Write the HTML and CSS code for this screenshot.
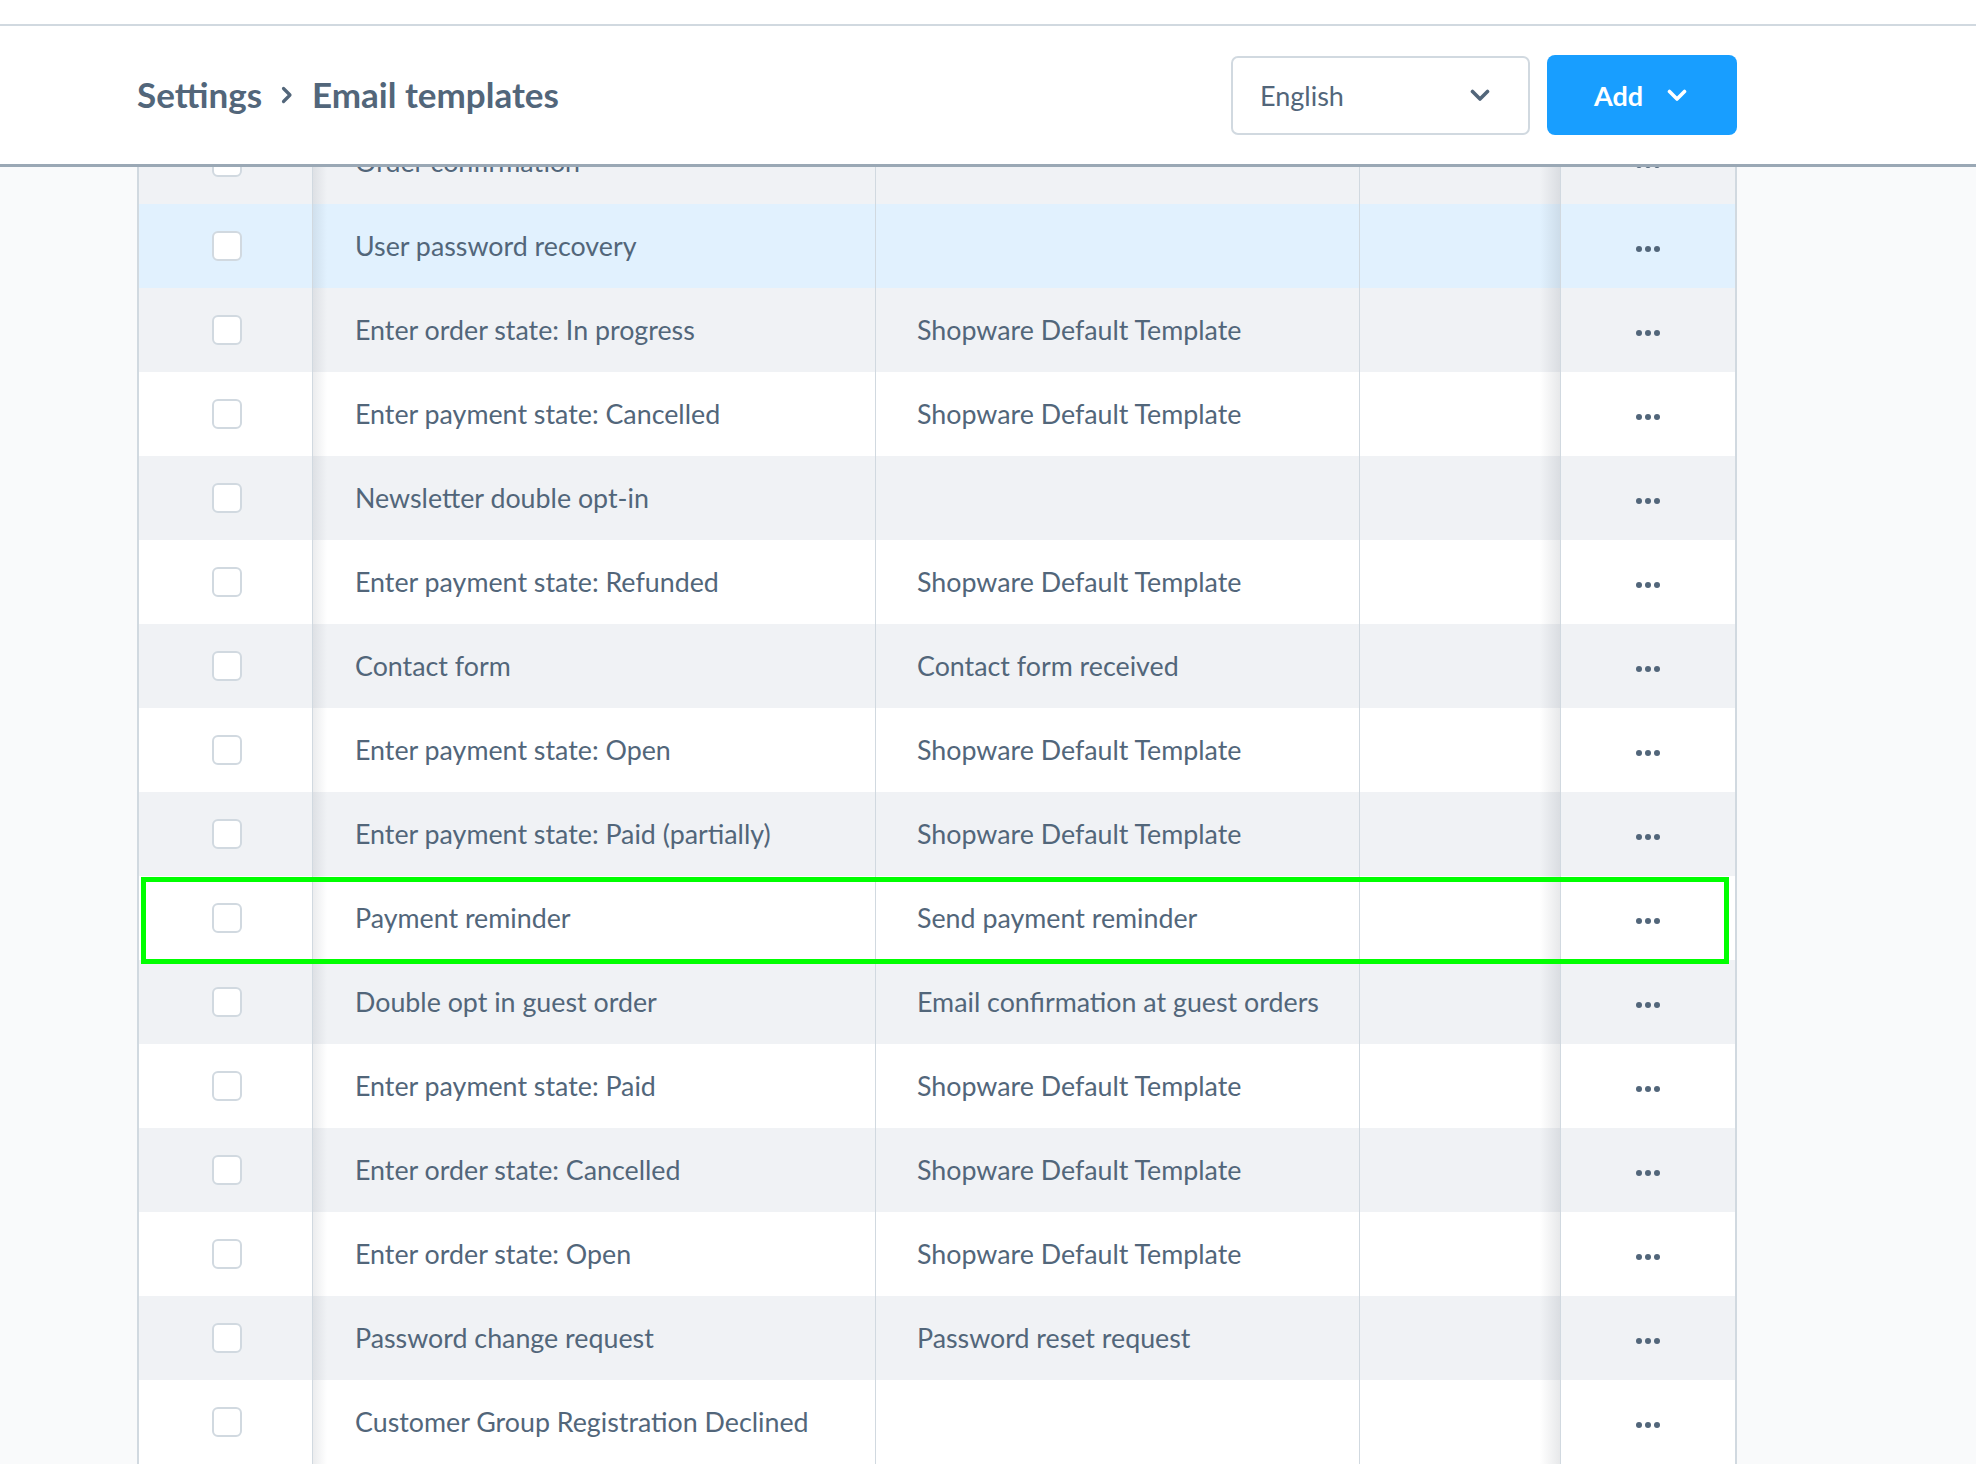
FILE: index.html
```html
<!DOCTYPE html>
<html lang="en">
<head>
<meta charset="utf-8">
<title>Email templates</title>
<link rel="stylesheet" href="styles.css">
</head>
<body>
<div class="topbar"></div>
<header class="header">
  <div class="header-inner">
    <nav class="crumbs">
      <span>Settings</span>
      <svg class="crumb-sep" width="12" height="18" viewBox="0 0 12 18"><path d="M2.5 2.5 L9 9 L2.5 15.5" fill="none" stroke="currentColor" stroke-width="3.2" stroke-linecap="round" stroke-linejoin="round"/></svg>
      <span>Email templates</span>
    </nav>
    <div class="toolbar">
      <div class="select">
        <span>English</span>
        <svg width="20" height="13" viewBox="0 0 20 13"><path d="M2.5 2.5 L10 10 L17.5 2.5" fill="none" stroke="currentColor" stroke-width="3.6" stroke-linecap="round" stroke-linejoin="round"/></svg>
      </div>
      <button class="btn">
        <span>Add</span>
        <svg width="20" height="13" viewBox="0 0 20 13"><path d="M2.5 2.5 L10 10 L17.5 2.5" fill="none" stroke="currentColor" stroke-width="3.6" stroke-linecap="round" stroke-linejoin="round"/></svg>
      </button>
    </div>
  </div>
</header>
<main class="content">
  <div class="table">
    <div class="row alt"><div class="c sel"><span class="cb"></span></div><div class="c name">Order confirmation</div><div class="c tpl"></div><div class="c gap"></div><div class="c act"><svg class="dots" width="24" height="6" viewBox="0 0 24 6"><circle cx="3" cy="3" r="3"/><circle cx="12" cy="3" r="3"/><circle cx="21" cy="3" r="3"/></svg></div></div>
    <div class="row hover"><div class="c sel"><span class="cb"></span></div><div class="c name">User password recovery</div><div class="c tpl"></div><div class="c gap"></div><div class="c act"><svg class="dots" width="24" height="6" viewBox="0 0 24 6"><circle cx="3" cy="3" r="3"/><circle cx="12" cy="3" r="3"/><circle cx="21" cy="3" r="3"/></svg></div></div>
    <div class="row alt"><div class="c sel"><span class="cb"></span></div><div class="c name">Enter order state: In progress</div><div class="c tpl">Shopware Default Template</div><div class="c gap"></div><div class="c act"><svg class="dots" width="24" height="6" viewBox="0 0 24 6"><circle cx="3" cy="3" r="3"/><circle cx="12" cy="3" r="3"/><circle cx="21" cy="3" r="3"/></svg></div></div>
    <div class="row"><div class="c sel"><span class="cb"></span></div><div class="c name">Enter payment state: Cancelled</div><div class="c tpl">Shopware Default Template</div><div class="c gap"></div><div class="c act"><svg class="dots" width="24" height="6" viewBox="0 0 24 6"><circle cx="3" cy="3" r="3"/><circle cx="12" cy="3" r="3"/><circle cx="21" cy="3" r="3"/></svg></div></div>
    <div class="row alt"><div class="c sel"><span class="cb"></span></div><div class="c name">Newsletter double opt-in</div><div class="c tpl"></div><div class="c gap"></div><div class="c act"><svg class="dots" width="24" height="6" viewBox="0 0 24 6"><circle cx="3" cy="3" r="3"/><circle cx="12" cy="3" r="3"/><circle cx="21" cy="3" r="3"/></svg></div></div>
    <div class="row"><div class="c sel"><span class="cb"></span></div><div class="c name">Enter payment state: Refunded</div><div class="c tpl">Shopware Default Template</div><div class="c gap"></div><div class="c act"><svg class="dots" width="24" height="6" viewBox="0 0 24 6"><circle cx="3" cy="3" r="3"/><circle cx="12" cy="3" r="3"/><circle cx="21" cy="3" r="3"/></svg></div></div>
    <div class="row alt"><div class="c sel"><span class="cb"></span></div><div class="c name">Contact form</div><div class="c tpl">Contact form received</div><div class="c gap"></div><div class="c act"><svg class="dots" width="24" height="6" viewBox="0 0 24 6"><circle cx="3" cy="3" r="3"/><circle cx="12" cy="3" r="3"/><circle cx="21" cy="3" r="3"/></svg></div></div>
    <div class="row"><div class="c sel"><span class="cb"></span></div><div class="c name">Enter payment state: Open</div><div class="c tpl">Shopware Default Template</div><div class="c gap"></div><div class="c act"><svg class="dots" width="24" height="6" viewBox="0 0 24 6"><circle cx="3" cy="3" r="3"/><circle cx="12" cy="3" r="3"/><circle cx="21" cy="3" r="3"/></svg></div></div>
    <div class="row alt"><div class="c sel"><span class="cb"></span></div><div class="c name">Enter payment state: Paid (partially)</div><div class="c tpl">Shopware Default Template</div><div class="c gap"></div><div class="c act"><svg class="dots" width="24" height="6" viewBox="0 0 24 6"><circle cx="3" cy="3" r="3"/><circle cx="12" cy="3" r="3"/><circle cx="21" cy="3" r="3"/></svg></div></div>
    <div class="row marked"><div class="c sel"><span class="cb"></span></div><div class="c name">Payment reminder</div><div class="c tpl">Send payment reminder</div><div class="c gap"></div><div class="c act"><svg class="dots" width="24" height="6" viewBox="0 0 24 6"><circle cx="3" cy="3" r="3"/><circle cx="12" cy="3" r="3"/><circle cx="21" cy="3" r="3"/></svg></div><div class="mark"></div></div>
    <div class="row alt"><div class="c sel"><span class="cb"></span></div><div class="c name">Double opt in guest order</div><div class="c tpl">Email confirmation at guest orders</div><div class="c gap"></div><div class="c act"><svg class="dots" width="24" height="6" viewBox="0 0 24 6"><circle cx="3" cy="3" r="3"/><circle cx="12" cy="3" r="3"/><circle cx="21" cy="3" r="3"/></svg></div></div>
    <div class="row"><div class="c sel"><span class="cb"></span></div><div class="c name">Enter payment state: Paid</div><div class="c tpl">Shopware Default Template</div><div class="c gap"></div><div class="c act"><svg class="dots" width="24" height="6" viewBox="0 0 24 6"><circle cx="3" cy="3" r="3"/><circle cx="12" cy="3" r="3"/><circle cx="21" cy="3" r="3"/></svg></div></div>
    <div class="row alt"><div class="c sel"><span class="cb"></span></div><div class="c name">Enter order state: Cancelled</div><div class="c tpl">Shopware Default Template</div><div class="c gap"></div><div class="c act"><svg class="dots" width="24" height="6" viewBox="0 0 24 6"><circle cx="3" cy="3" r="3"/><circle cx="12" cy="3" r="3"/><circle cx="21" cy="3" r="3"/></svg></div></div>
    <div class="row"><div class="c sel"><span class="cb"></span></div><div class="c name">Enter order state: Open</div><div class="c tpl">Shopware Default Template</div><div class="c gap"></div><div class="c act"><svg class="dots" width="24" height="6" viewBox="0 0 24 6"><circle cx="3" cy="3" r="3"/><circle cx="12" cy="3" r="3"/><circle cx="21" cy="3" r="3"/></svg></div></div>
    <div class="row alt"><div class="c sel"><span class="cb"></span></div><div class="c name">Password change request</div><div class="c tpl">Password reset request</div><div class="c gap"></div><div class="c act"><svg class="dots" width="24" height="6" viewBox="0 0 24 6"><circle cx="3" cy="3" r="3"/><circle cx="12" cy="3" r="3"/><circle cx="21" cy="3" r="3"/></svg></div></div>
    <div class="row"><div class="c sel"><span class="cb"></span></div><div class="c name">Customer Group Registration Declined</div><div class="c tpl"></div><div class="c gap"></div><div class="c act"><svg class="dots" width="24" height="6" viewBox="0 0 24 6"><circle cx="3" cy="3" r="3"/><circle cx="12" cy="3" r="3"/><circle cx="21" cy="3" r="3"/></svg></div></div>
  </div>
</main>
</body>
</html>
```

FILE: styles.css
```css
* {
  box-sizing: border-box;
}

html,
body {
  margin: 0;
  height: 100%;
  overflow: hidden;
}

body {
  background: #f9fafb;
  font-family: Lato, "Liberation Sans", sans-serif;
  color: #52667a;
}

.topbar {
  height: 26px;
  background: #fff;
  border-bottom: 2px solid #d1d9e0;
}

.header {
  height: 141px;
  background: #fff;
  border-bottom: 3px solid #9aa8b5;
}

.header-inner {
  width: 1600px;
  margin-left: 137px;
  height: 100%;
  display: flex;
  align-items: center;
  justify-content: space-between;
}

.crumbs {
  display: flex;
  align-items: center;
  gap: 19px;
  font-size: 35px;
  font-weight: 700;
  color: #52667a;
  margin-top: -2px;
}

.crumb-sep {
  margin-top: 2px;
}

.toolbar {
  display: flex;
  align-items: center;
  gap: 17px;
}

.select {
  width: 299px;
  height: 79px;
  border: 2px solid #d1d9e0;
  border-radius: 7px;
  background: #fff;
  display: flex;
  align-items: center;
  justify-content: space-between;
  padding: 0 38px 0 27px;
  font-size: 27px;
  color: #52667a;
}

.btn {
  width: 190px;
  height: 80px;
  border: 0;
  border-radius: 8px;
  background: #189eff;
  color: #fff;
  font-family: inherit;
  font-size: 27px;
  font-weight: 700;
  display: flex;
  align-items: center;
  gap: 24px;
  padding: 0 0 0 47px;
}

.content {
  height: calc(100vh - 167px);
  overflow: hidden;
}

.table {
  width: 1600px;
  margin-left: 137px;
  margin-top: -47px;
  border-left: 2px solid #d1d9e0;
  border-right: 2px solid #d1d9e0;
}

.row {
  display: grid;
  grid-template-columns: 174px 563px 484px 200px 175px;
  height: 84px;
  background: #fff;
  font-size: 26.8px;
}

.row.alt {
  background: #f0f2f5;
}

.row.hover {
  background: #e1f1fe;
}

.row.marked {
  position: relative;
}

.c {
  display: flex;
  align-items: center;
  white-space: nowrap;
}

.c.sel {
  justify-content: center;
  border-right: 1px solid #d1d9e0;
}

.cb {
  width: 30px;
  height: 30px;
  border: 2px solid #d1d9e0;
  border-radius: 6px;
  background: #fff;
  margin-left: 2px;
}

.c.name {
  padding-left: 42px;
  border-right: 1px solid #d1d9e0;
  background-image: linear-gradient(to right, rgba(60, 70, 85, 0.1), rgba(60, 70, 85, 0) 14px);
}

.c.tpl {
  padding-left: 41px;
  border-right: 1px solid #d1d9e0;
}

.c.gap {
  background-image: linear-gradient(to left, rgba(60, 70, 85, 0.12), rgba(60, 70, 85, 0) 20px);
}

.c.act {
  justify-content: center;
  border-left: 1px solid #d1d9e0;
}

.dots {
  fill: #52667a;
  margin-top: 5px;
}

.mark {
  position: absolute;
  top: 1px;
  left: 2px;
  width: 1588px;
  height: 87px;
  border: 5px solid #00ff00;
  z-index: 3;
  pointer-events: none;
}
```
